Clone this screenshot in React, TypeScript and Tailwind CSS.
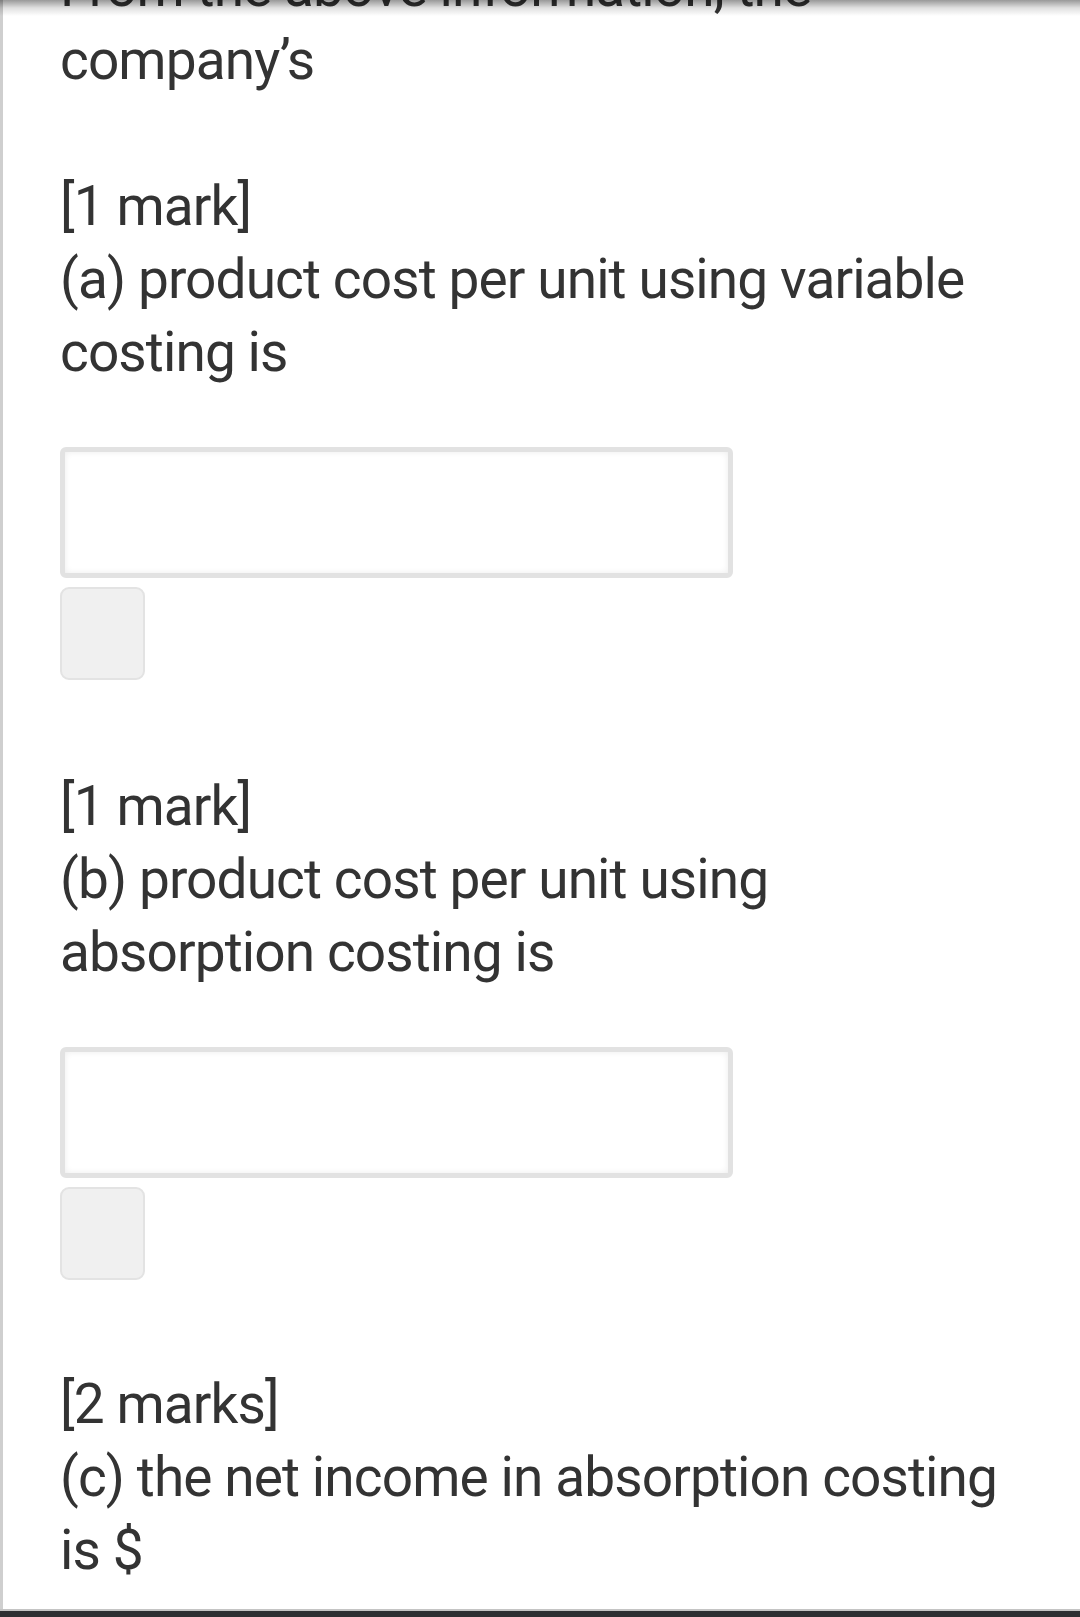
import React from "react";

function AnswerBlock() {
  return (
    <>
      <div className="mt-[58px] h-[131px] w-[673px] rounded-[6px] border-[5px] border-[#e2e2e2] bg-white shadow-[inset_0_0_6px_rgba(0,0,0,0.08)]" />
      <div className="mt-[9px] h-[93px] w-[85px] rounded-[9px] border-2 border-[#e3e3e3] bg-[#f0f0f0]" />
    </>
  );
}

export default function App() {
  return (
    <div className="relative flex h-[1617px] flex-col overflow-hidden bg-white font-['Roboto','Liberation_Sans',sans-serif] text-[#333333]">
      <div className="flex-1 border-l-[3px] border-[#cfcfcf] pl-[57px] pr-[60px]">
        <div className="-mt-[49px] text-[55px] leading-[73px] tracking-[-0.9px]">
          <p>From the above information, the company’s</p>

          <p className="mt-[73px]">[1 mark]</p>
          <p>(a) product cost per unit using variable costing is</p>
          <AnswerBlock />

          <p className="mt-[90px]">[1 mark]</p>
          <p>(b) product cost per unit using absorption costing is</p>
          <AnswerBlock />

          <p className="mt-[88px]">[2 marks]</p>
          <p>(c) the net income in absorption costing is $</p>
        </div>
      </div>
      <div className="h-[2px] bg-[#c4c4c4]" />
      <div className="h-[6px] bg-[#2d2f32]" />
      <div className="pointer-events-none absolute inset-x-0 top-0 h-[16px] bg-linear-to-b from-[rgba(0,0,0,0.4)] via-[rgba(0,0,0,0.12)] to-transparent" />
    </div>
  );
}
